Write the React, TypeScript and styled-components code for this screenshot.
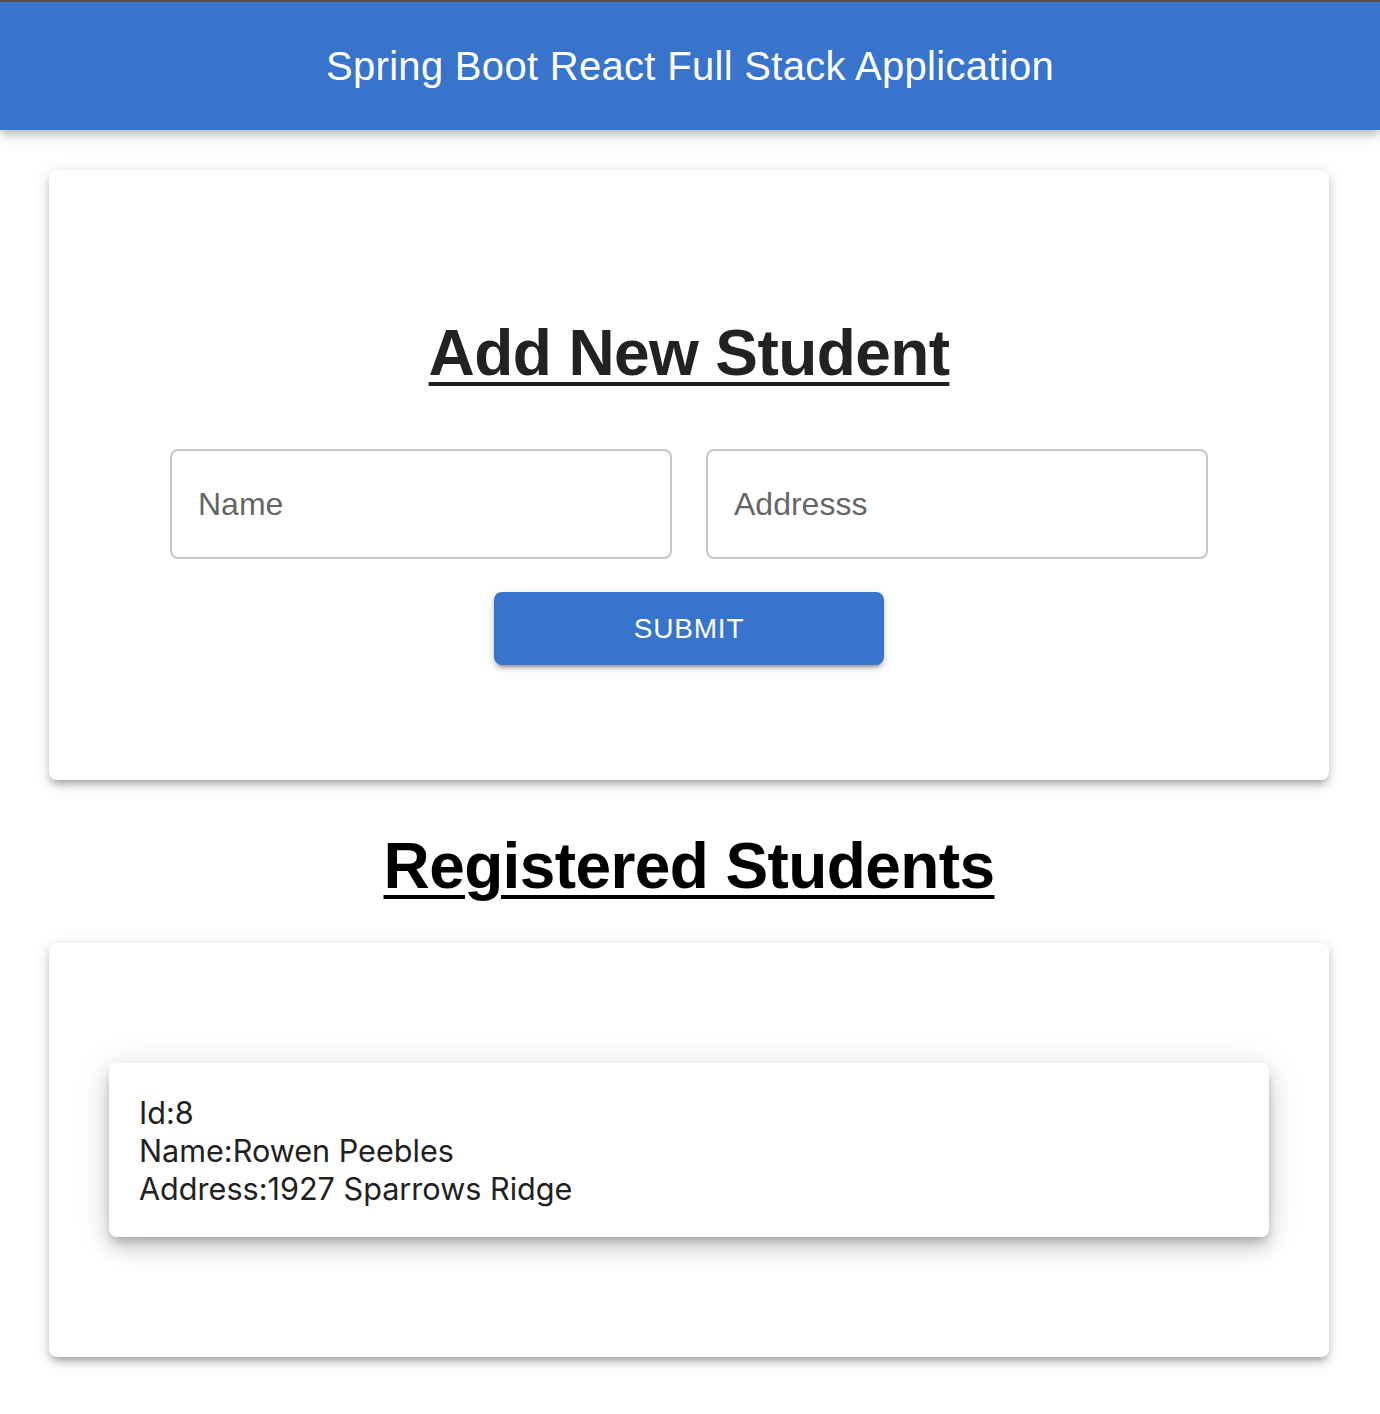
import React from "react";
import styled, { createGlobalStyle } from "styled-components";

const GlobalStyle = createGlobalStyle`
  * { box-sizing: border-box; }
  html, body { margin: 0; padding: 0; background: #ffffff; }
  body { font-family: "Liberation Sans", Arial, sans-serif; }
`;

const Page = styled.div`
  min-height: 1414px;
  background: #ffffff;
`;

const AppBar = styled.header`
  height: 130px;
  border-top: 2px solid #505050;
  background: #3874cb;
  display: flex;
  align-items: center;
  justify-content: center;
  box-shadow: 0 4px 8px -2px rgba(0, 0, 0, 0.2), 0 8px 10px 0 rgba(0, 0, 0, 0.12);
  position: relative;
  z-index: 1;
`;

const AppTitle = styled.h6`
  margin: 0;
  font-family: "Liberation Sans", Arial, sans-serif;
  font-weight: 400;
  font-size: 40px;
  color: #ffffff;
  letter-spacing: 0.3px;
`;

const Main = styled.main`
  padding: 40px 51px 57px 49px;
  display: flex;
  flex-direction: column;
`;

const Paper = styled.section<{ $pad: string }>`
  background: #ffffff;
  border-radius: 8px;
  padding: ${(p) => p.$pad};
  box-shadow: 0 6px 6px -4px rgba(0, 0, 0, 0.2), 0 6px 8px 0 rgba(0, 0, 0, 0.14),
    0 2px 16px 0 rgba(0, 0, 0, 0.12);
  display: flex;
  flex-direction: column;
  align-items: stretch;
`;

const Heading = styled.h1<{ $color: string; $mb: number; $mt: number }>`
  margin: ${(p) => p.$mt}px 0 ${(p) => p.$mb}px;
  font-family: "Liberation Sans", Arial, sans-serif;
  font-weight: 700;
  font-size: 64px;
  line-height: 74px;
  letter-spacing: -0.6px;
  text-align: center;
  color: ${(p) => p.$color};
  text-decoration: underline;
  text-decoration-thickness: 4px;
  text-underline-offset: 7px;
`;

const FieldRow = styled.div`
  display: flex;
  justify-content: center;
  gap: 34px;
`;

const Field = styled.input`
  width: 502px;
  height: 110px;
  padding: 0 26px;
  border: 2px solid #c7c7c7;
  border-radius: 8px;
  font-family: "Liberation Sans", Arial, sans-serif;
  font-size: 32px;
  color: #212121;
  background: #ffffff;
  outline: none;
  &::placeholder {
    color: #666666;
    opacity: 1;
  }
`;

const SubmitButton = styled.button`
  align-self: center;
  margin-top: 33px;
  width: 390px;
  height: 73px;
  border: none;
  border-radius: 8px;
  background: #3874cb;
  color: #ffffff;
  font-family: "Liberation Sans", Arial, sans-serif;
  font-size: 28px;
  letter-spacing: 0.8px;
  text-transform: uppercase;
  cursor: pointer;
  box-shadow: 0 6px 2px -4px rgba(0, 0, 0, 0.2), 0 4px 4px 0 rgba(0, 0, 0, 0.14),
    0 2px 10px 0 rgba(0, 0, 0, 0.12);
`;

const StudentCard = styled.article`
  background: #ffffff;
  border-radius: 8px;
  padding: 31px 30px 29px;
  box-shadow: 0 6px 10px -2px rgba(0, 0, 0, 0.2), 0 12px 20px 0 rgba(0, 0, 0, 0.14),
    0 2px 36px 0 rgba(0, 0, 0, 0.12);
  font-family: Inter, "Noto Sans", sans-serif;
  font-size: 30.6px;
  line-height: 38px;
  color: #212121;
`;

const Line = styled.div``;

const students = [{ id: 8, name: "Rowen Peebles", address: "1927 Sparrows Ridge" }];

export default function App() {
  return (
    <Page>
      <GlobalStyle />
      <AppBar>
        <AppTitle>Spring Boot React Full Stack Application</AppTitle>
      </AppBar>
      <Main>
        <Paper $pad="146px 0 115px">
          <Heading $color="#222222" $mt={0} $mb={59}>
            Add New Student
          </Heading>
          <FieldRow>
            <Field placeholder="Name" />
            <Field placeholder="Addresss" />
          </FieldRow>
          <SubmitButton>Submit</SubmitButton>
        </Paper>
        <Heading $color="#000000" $mt={49} $mb={40}>
          Registered Students
        </Heading>
        <Paper $pad="120px 60px">
          {students.map((s) => (
            <StudentCard key={s.id}>
              <Line>Id:{s.id}</Line>
              <Line>Name:{s.name}</Line>
              <Line>Address:{s.address}</Line>
            </StudentCard>
          ))}
        </Paper>
      </Main>
    </Page>
  );
}
